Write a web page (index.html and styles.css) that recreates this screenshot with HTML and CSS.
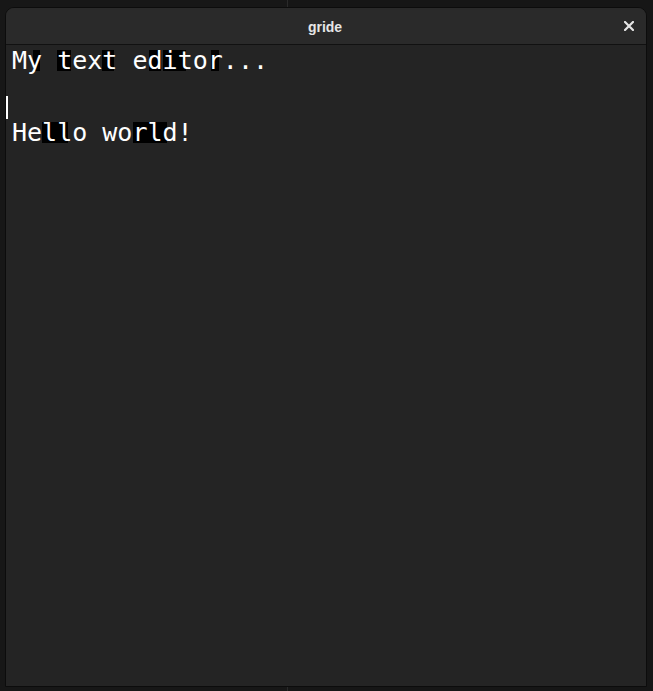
FILE: index.html
```html
<!DOCTYPE html>
<html lang="en">
<head>
<meta charset="utf-8">
<title>gride</title>
<link rel="stylesheet" href="styles.css">
</head>
<body>
<div class="desktop">
  <div class="pane pane-left"></div>
  <div class="pane pane-right"></div>
  <div class="window">
    <header class="titlebar">
      <span class="title">gride</span>
      <button class="close" aria-label="Close">
        <svg width="10" height="10" viewBox="0 0 10 10"><path d="M1 1 L9 9 M9 1 L1 9" stroke="#e4e4e4" stroke-width="2.2" stroke-linecap="square" fill="none"/></svg>
      </button>
    </header>
    <div class="editor">
      <div class="line">M<span class="ink ink-y">y</span> <span class="ink ink-t">t</span>ex<span class="ink ink-t2">t</span> e<span class="ink ink-d">d</span><span class="ink ink-it">it</span>o<span class="ink ink-r">r</span>...</div>
      <div class="line"><span class="cursor"></span></div>
      <div class="line">He<span class="ink ink-ll">ll</span>o wo<span class="ink ink-rld">rld</span>!</div>
    </div>
  </div>
</div>
</body>
</html>
```

FILE: styles.css
```css
html, body {
  margin: 0;
  padding: 0;
  background: #161616;
}

.desktop {
  position: relative;
  width: 653px;
  height: 691px;
  display: flex;
  overflow: hidden;
}

.pane {
  height: 100%;
}

.pane-left {
  width: 287px;
  border-right: 1px solid #2a2a2a;
  background: #171717;
}

.pane-right {
  flex: 1;
  background: #161616;
}

.window {
  position: absolute;
  left: 5px;
  top: 7px;
  width: 640px;
  height: 678px;
  border: 1px solid #0c0c0c;
  border-radius: 9px 9px 0 0;
  background: #242424;
  display: flex;
  flex-direction: column;
  overflow: hidden;
}

.titlebar {
  height: 36px;
  flex: none;
  background: #2a2a2a;
  border-bottom: 1px solid #111111;
  display: flex;
  align-items: center;
  justify-content: center;
  position: relative;
}

.title {
  font-family: "Liberation Sans", Arial, sans-serif;
  font-weight: bold;
  font-size: 14px;
  color: #e6e6e6;
  margin-left: -2px;
  margin-top: 2px;
}

.close {
  position: absolute;
  right: 12px;
  top: 13px;
  width: 10px;
  height: 10px;
  padding: 0;
  border: 0;
  background: none;
  display: flex;
}

.editor {
  padding-left: 6px;
  font-family: "DejaVu Sans Mono", monospace;
  font-size: 25px;
  line-height: 32px;
  color: #ffffff;
}

.line {
  height: 36px;
  white-space: pre;
}

.ink {
  --x: 0px;
  --w: 14px;
  background-image: linear-gradient(#000, #000);
  background-repeat: no-repeat;
  background-size: var(--w) 21px;
  background-position: var(--x) 4px;
}

.ink-y { --x: 6px; --w: 7px; }
.ink-t { --x: 0px; --w: 14px; }
.ink-t2 { --x: 0px; --w: 12px; }
.ink-d { --x: 1px; --w: 12px; }
.ink-it { --x: 0px; --w: 23px; }
.ink-r { --x: 3px; --w: 8px; }
.ink-ll { --x: 0px; --w: 26px; }
.ink-rld { --x: 1px; --w: 34px; }

.cursor {
  display: inline-block;
  width: 2px;
  height: 23px;
  margin-left: -6px;
  background: #ffffff;
  vertical-align: -14px;
}
```
